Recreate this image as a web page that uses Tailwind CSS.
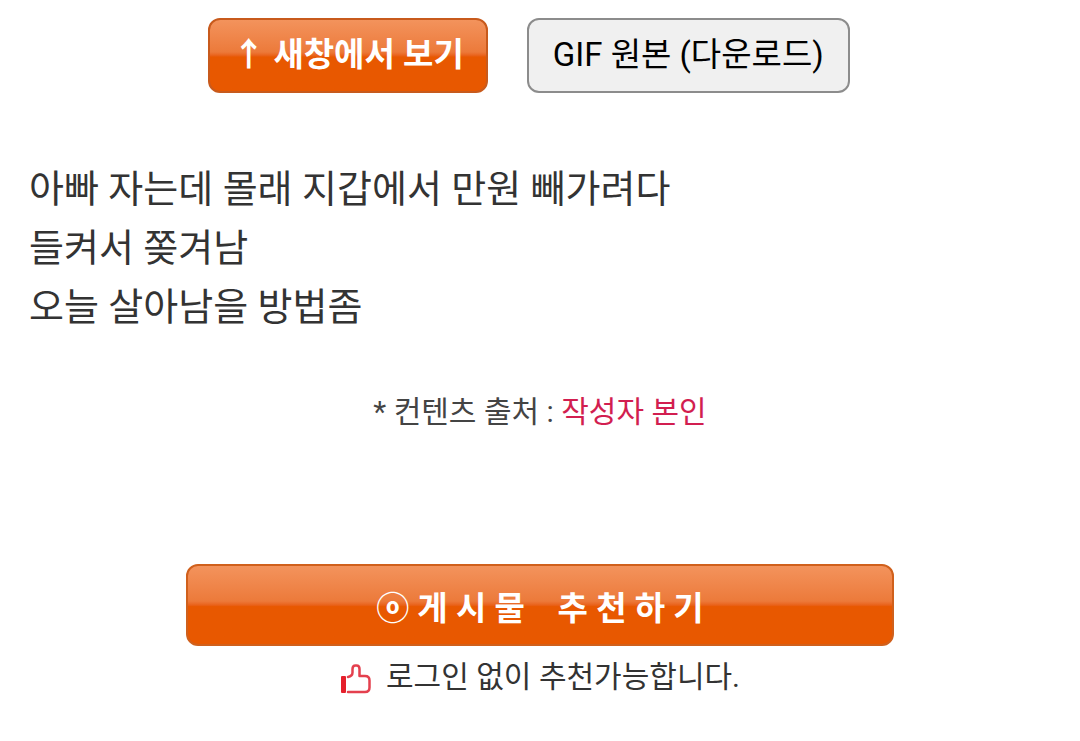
<!DOCTYPE html>
<html lang="ko">
<head>
    <meta charset="UTF-8">
    <meta name="viewport" content="width=device-width, initial-scale=1.0">
    <title>게시물 보기</title>
    <script src="https://cdn.jsdelivr.net/npm/@tailwindcss/browser@4"></script>
</head>
<body class="bg-white text-[#333] font-[Roboto,'Noto_Sans_CJK_KR',sans-serif]">
    <main class="px-[29px] pt-[18px] pb-8">
        <div class="flex flex-wrap justify-center gap-[39px] pr-[22px]">
            <button type="button" class="h-[75px] px-[22px] pb-[2px] rounded-xl border-2 border-[#c85a1c] bg-linear-to-b from-[#f3935c] from-0% via-[#ec7a3a] via-45% to-[#e85800] to-52% text-[33px] leading-[48px] font-bold text-white whitespace-pre">↑ 새창에서 보기</button>
            <button type="button" class="h-[75px] px-6 pb-[2px] rounded-xl border-2 border-[#8c8c8c] bg-[#f0f0f0] text-[33px] leading-[48px] text-black">GIF 원본 (다운로드)</button>
        </div>

        <p class="mt-[67px] text-[38px] leading-[59px]">
            아빠 자는데 몰래 지갑에서 만원 빼가려다<br>
            들켜서 쫒겨남<br>
            오늘 살아남을 방법좀
        </p>

        <p class="mt-[53px] text-center text-[30px] leading-[44px] text-[#444]">
            * 컨텐츠 출처 : <a href="#" class="text-[#d21e50]">작성자 본인</a>
        </p>

        <div class="mt-[130px] flex flex-col items-center">
            <button type="button" class="flex items-center justify-center gap-2 w-full max-w-[708px] h-[82px] pt-2 rounded-xl border-2 border-[#d0601c] bg-linear-to-b from-[#f3935c] from-0% via-[#ec7a3a] via-45% to-[#e85800] to-52% text-[33px] leading-[48px] font-bold text-white">
                <span>ⓞ</span>
                <span>게 시 물&nbsp;&nbsp;&nbsp;&nbsp;추 천 하 기</span>
            </button>
            <p class="mt-[9px] flex items-center gap-[14px] text-[30px] leading-[44px]">
                <svg class="w-8 h-8 mt-1" viewBox="0 0 32 32" fill="none">
                    <path d="M2 14h3v15H2z" fill="#e5202c" stroke="#e5202c" stroke-width="2" stroke-linejoin="round"/>
                    <path d="M8 29h17q4.500 0 4.500-4.500v-7q0-4.500-4.500-4.500h-5.500V6q0-3.500-3-3.500h-1q-3 0-3 3.500v3.500q0 3.500-4.500 4.500" stroke="#e4404e" stroke-width="2.500" stroke-linecap="round" stroke-linejoin="round"/>
                </svg>
                <span>로그인 없이 추천가능합니다.</span>
            </p>
        </div>
    </main>
</body>
</html>
